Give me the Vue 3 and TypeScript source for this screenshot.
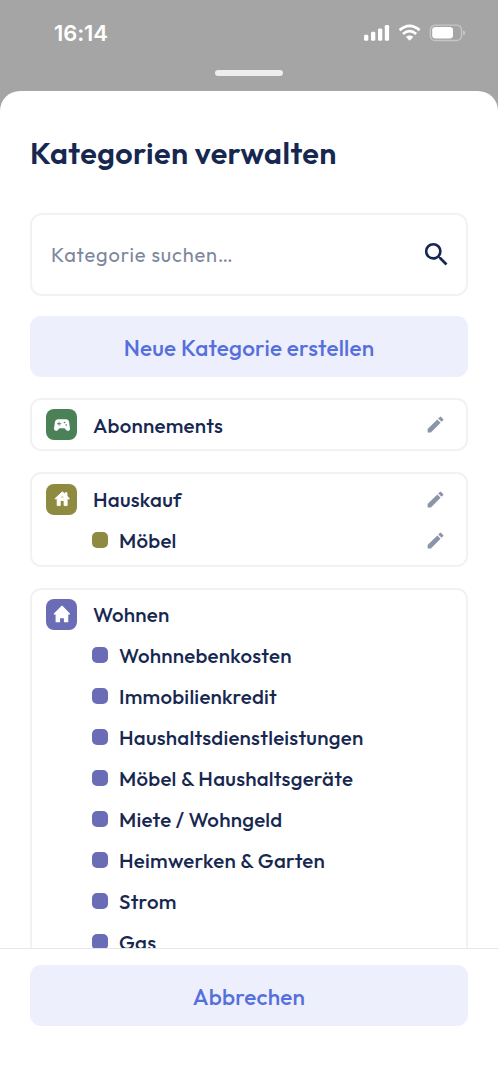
<script setup lang="ts">
interface Category {
  name: string
  icon: 'gamepad' | 'cottage' | 'home'
  tone: string
  editable: boolean
  children: string[]
}

const categories: Category[] = [
  { name: 'Abonnements', icon: 'gamepad', tone: 'green', editable: true, children: [] },
  { name: 'Hauskauf', icon: 'cottage', tone: 'olive', editable: true, children: ['Möbel'] },
  {
    name: 'Wohnen', icon: 'home', tone: 'violet', editable: false,
    children: [
      'Wohnnebenkosten',
      'Immobilienkredit',
      'Haushaltsdienstleistungen',
      'Möbel & Haushaltsgeräte',
      'Miete / Wohngeld',
      'Heimwerken & Garten',
      'Strom',
      'Gas',
    ],
  },
]
</script>

<template>
  <div class="screen">
    <header class="backdrop">
      <div class="status">
        <span class="time">16:14</span>
        <svg class="signals" width="104" height="20" viewBox="0 0 104 20">
          <g fill="#fff">
            <rect x="1" y="11.8" width="4.3" height="6" rx="1.4" />
            <rect x="8" y="8.8" width="4.3" height="9" rx="1.4" />
            <rect x="15" y="5.4" width="4.3" height="12.4" rx="1.4" />
            <rect x="21.8" y="1.9" width="4.3" height="15.9" rx="1.4" />
            <path d="M43.4 13.6q3.2-2.2 6.4 0q.5.5 0 1l-2.7 2.7q-.5.4-1 0l-2.7-2.7q-.5-.5 0-1Z" />
          </g>
          <g fill="none" stroke="#fff" stroke-width="2.7">
            <path d="M36.6 7.1Q46.6-1.2 56.6 7.1" />
            <path d="M40 11Q46.6 5.4 53.2 11" />
          </g>
          <rect x="67.3" y="2.1" width="31.2" height="15.4" rx="4.8" fill="none" stroke="#fff" stroke-opacity=".38" stroke-width="1.3" />
          <rect x="69.2" y="4" width="20.8" height="11.6" rx="3.3" fill="#fff" />
          <path d="M100.2 7.4q1.8.8 1.8 2.4t-1.8 2.4Z" fill="#fff" fill-opacity=".5" />
        </svg>
      </div>
      <div class="grabber"></div>
    </header>

    <main class="sheet">
      <div class="content">
        <h1>Kategorien verwalten</h1>
        <label class="search">
          <span class="placeholder">Kategorie suchen…</span>
          <svg width="31" height="31" viewBox="0 0 24 24">
            <path fill="#172850" d="M15.5 14h-.79l-.28-.27A6.47 6.47 0 0 0 16 9.5 6.5 6.5 0 1 0 9.5 16c1.61 0 3.09-.59 4.23-1.57l.27.28v.79l5 4.99L20.49 19l-4.99-5zm-6 0a4.5 4.5 0 1 1 0-9 4.5 4.5 0 0 1 0 9z" />
          </svg>
        </label>
        <button class="action create">Neue Kategorie erstellen</button>

        <section v-for="cat in categories" :key="cat.name" class="card" :class="cat.tone">
          <div class="row">
            <span class="badge">
              <svg width="20" height="20" viewBox="0 0 24 24" fill="#fff">
                <path
                  v-if="cat.icon === 'gamepad'"
                  fill-rule="evenodd"
                  d="M21.58 16.09l-1.09-7.66A3.996 3.996 0 0 0 16.53 5H7.47C5.48 5 3.79 6.46 3.51 8.43l-1.09 7.66a2.545 2.545 0 0 0 4.32 2.16L9 16h6l2.25 2.25c.48.48 1.13.75 1.8.75 1.56 0 2.75-1.37 2.53-2.91zM11 11H9v2H8v-2H6v-1h2V8h1v2h2v1zm4-1c-.55 0-1-.45-1-1s.45-1 1-1 1 .45 1 1-.45 1-1 1zm2 3c-.55 0-1-.45-1-1s.45-1 1-1 1 .45 1 1-.45 1-1 1z"
                />
                <path
                  v-else-if="cat.icon === 'cottage'"
                  fill-rule="evenodd"
                  stroke="#fff"
                  stroke-width="1"
                  stroke-linejoin="round"
                  d="M18 8.2V4.4h-2.2v1.8L12.4 3.4 3.4 11.8h2.8v8.1h3.7v-6.1h4.6v6.1h3.7v-8.1h2.8zM10.4 10.6c0-1.1.8-2 1.9-2s1.9.9 1.9 2z"
                />
                <path
                  v-else
                  stroke="#fff"
                  stroke-width="1.4"
                  stroke-linejoin="round"
                  d="M9 21.2v-4q0-.9.9-.9h4.2q.9 0 .9.9v4h3.8V12h2.2L12 2.7 2.8 12H5v9.2z"
                />
              </svg>
            </span>
            <span class="label">{{ cat.name }}</span>
            <svg v-if="cat.editable" class="edit" width="21" height="21" viewBox="0 0 24 24">
              <path fill="#8b94a8" d="M3 17.25V21h3.75L17.81 9.94l-3.75-3.75L3 17.25zM20.71 7.04a1 1 0 0 0 0-1.41l-2.34-2.34a1 1 0 0 0-1.41 0l-1.83 1.83 3.75 3.75 1.83-1.83z" />
            </svg>
          </div>
          <div v-for="sub in cat.children" :key="sub" class="row child">
            <span class="swatch"></span>
            <span class="label">{{ sub }}</span>
            <svg v-if="cat.editable" class="edit" width="21" height="21" viewBox="0 0 24 24">
              <path fill="#8b94a8" d="M3 17.25V21h3.75L17.81 9.94l-3.75-3.75L3 17.25zM20.71 7.04a1 1 0 0 0 0-1.41l-2.34-2.34a1 1 0 0 0-1.41 0l-1.83 1.83 3.75 3.75 1.83-1.83z" />
            </svg>
          </div>
        </section>
      </div>
      <footer>
        <button class="action cancel">Abbrechen</button>
      </footer>
    </main>
  </div>
</template>

<style>
body {
  margin: 0;
  background: #fff;
}
</style>

<style scoped>
.screen {
  width: 498px;
  height: 1080px;
  overflow: hidden;
  display: flex;
  flex-direction: column;
  background: linear-gradient(#a5a5a5 120px, #fff 120px);
  font-family: Outfit, Lato, "Open Sans", sans-serif;
  color: #172850;
}
.backdrop {
  flex: none;
  height: 91px;
  display: flex;
  flex-direction: column;
  align-items: center;
}
.status {
  align-self: stretch;
  height: 70px;
  box-sizing: border-box;
  padding: 20px 31px 0 54px;
  display: flex;
  justify-content: space-between;
  align-items: flex-start;
}
.time {
  font: 600 22px/27px Inter, "Liberation Sans", sans-serif;
  letter-spacing: -0.1px;
  color: #fff;
}
.signals {
  margin-top: 3px;
}
.grabber {
  width: 68px;
  height: 6px;
  border-radius: 3px;
  background: #ededed;
}
.sheet {
  flex: 1;
  min-height: 0;
  display: flex;
  flex-direction: column;
  background: #fff;
  border-radius: 20px 20px 0 0;
  overflow: hidden;
}
.content {
  flex: none;
  height: 857px;
  box-sizing: border-box;
  overflow: hidden;
  padding: 42px 30px 0;
}
h1 {
  margin: 0 0 40px;
  font-size: 30.5px;
  font-weight: 600;
  line-height: 40px;
  letter-spacing: 0.4px;
  white-space: nowrap;
}
.search {
  height: 83px;
  box-sizing: border-box;
  border: 2px solid #f2f2f5;
  border-radius: 12px;
  padding: 0 14px 0 19px;
  display: flex;
  align-items: center;
  justify-content: space-between;
}
.placeholder {
  font-size: 20px;
  line-height: 26px;
  letter-spacing: 0.85px;
  color: #7d879c;
}
.action {
  display: block;
  width: 438px;
  height: 61px;
  border: 0;
  border-radius: 11px;
  padding: 1px 0 0;
  background: #edeffc;
  color: #5570dc;
  font-family: inherit;
  font-size: 22.5px;
  font-weight: 500;
  letter-spacing: 0.2px;
}
.create {
  margin: 20px 0 21px;
}
.card {
  box-sizing: border-box;
  border: 2px solid #f2f2f5;
  border-radius: 11px;
  padding: 9.3px 20.5px 9px 14px;
  margin-bottom: 21px;
  display: flex;
  flex-direction: column;
  gap: 9.95px;
}
.green { --tone: #4b8157; }
.olive { --tone: #8e8b40; }
.violet { --tone: #6a6db6; }
.row {
  height: 31px;
  display: flex;
  align-items: center;
}
.badge {
  width: 31px;
  height: 31px;
  margin-right: 16px;
  border-radius: 8px;
  background: var(--tone);
  display: flex;
  align-items: center;
  justify-content: center;
}
.label {
  font-size: 20.5px;
  font-weight: 500;
  line-height: 26px;
  letter-spacing: 0.23px;
  white-space: nowrap;
}
.child {
  padding-left: 46px;
}
.swatch {
  width: 16px;
  height: 16px;
  margin-right: 11px;
  border-radius: 5px;
  background: var(--tone);
}
.edit {
  margin-left: auto;
}
footer {
  flex: 1;
  border-top: 1px solid #e6e6ea;
  padding: 16px 30px 0;
}
</style>
